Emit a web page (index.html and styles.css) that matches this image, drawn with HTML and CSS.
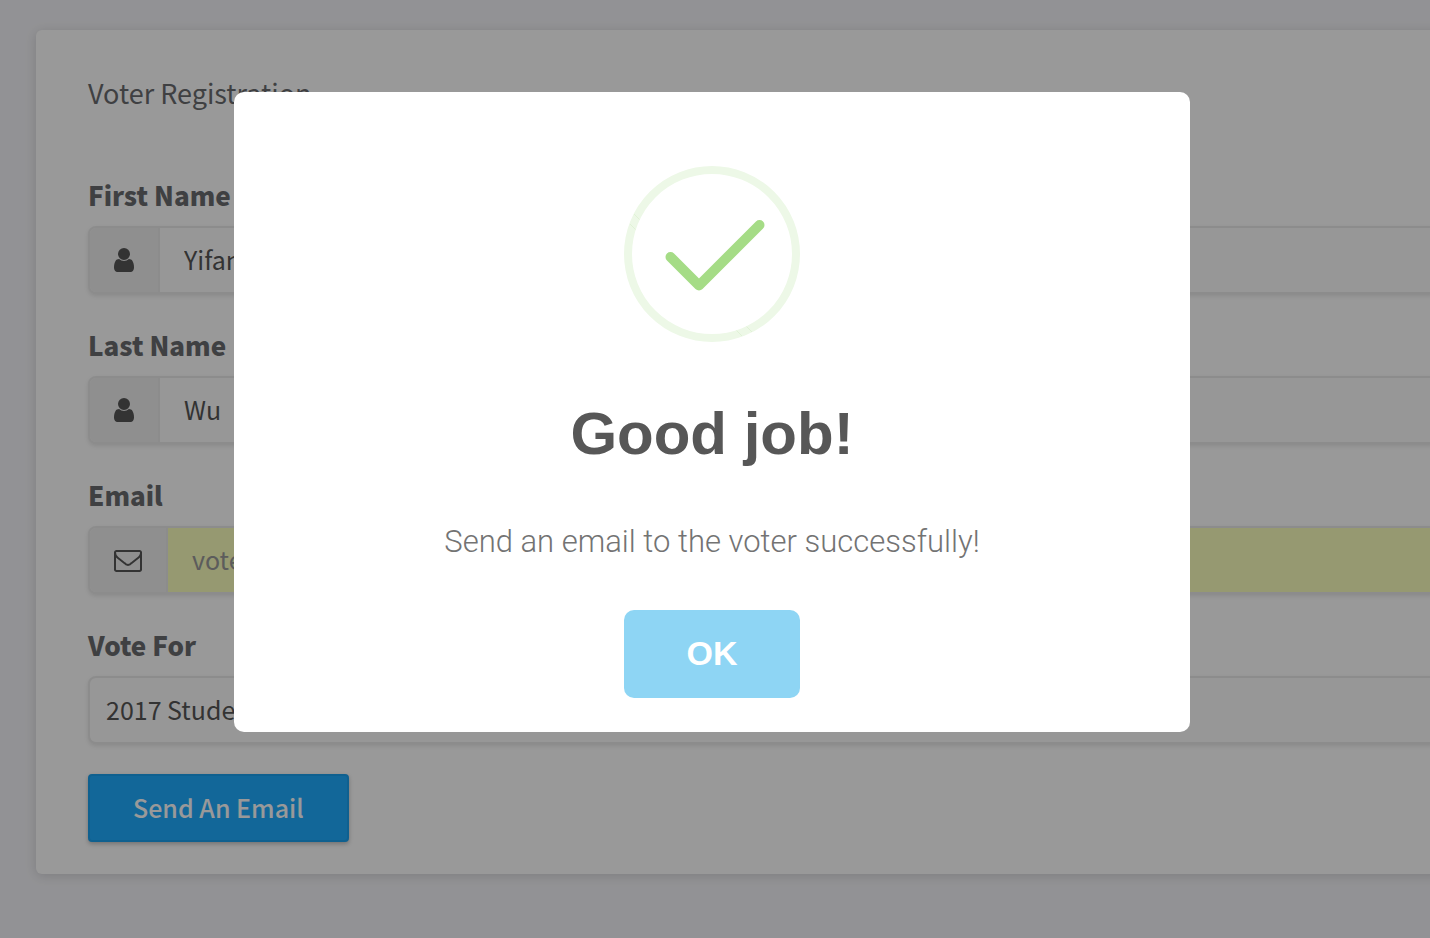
FILE: index.html
```html
<!DOCTYPE html>
<html lang="en">
<head>
<meta charset="utf-8">
<meta name="viewport" content="width=device-width, initial-scale=1">
<title>Voter Registration</title>
<link rel="stylesheet" href="styles.css">
</head>
<body>
<main class="page">
  <section class="card">
    <h1 class="card-title">Voter Registration</h1>
    <form class="form">
      <div class="field">
        <label class="label" for="first">First Name</label>
        <div class="group">
          <span class="addon"><svg class="icon-user" viewBox="256 128 1280 1536" aria-hidden="true"><path d="M1536 1399q0 109-62.5 187t-150.5 78h-854q-88 0-150.5-78t-62.5-187q0-85 8.5-160.5t31.5-152 58.5-131 94-89 134.500-34.500q131 128 313 128t313-128q76 0 134.500 34.500t94 89 58.500 131 31.500 152 8.500 160.500zm-256-887q0 159-112.500 271.500t-271.500 112.500-271.500-112.500-112.500-271.500 112.500-271.500 271.500-112.500 271.500 112.500 112.500 271.500z"/></svg></span>
          <input class="input" id="first" type="text" value="Yifan">
        </div>
      </div>
      <div class="field">
        <label class="label" for="last">Last Name</label>
        <div class="group">
          <span class="addon"><svg class="icon-user" viewBox="256 128 1280 1536" aria-hidden="true"><path d="M1536 1399q0 109-62.5 187t-150.5 78h-854q-88 0-150.5-78t-62.5-187q0-85 8.5-160.5t31.5-152 58.5-131 94-89 134.500-34.500q131 128 313 128t313-128q76 0 134.500 34.500t94 89 58.500 131 31.500 152 8.500 160.500zm-256-887q0 159-112.500 271.500t-271.500 112.500-271.500-112.500-112.500-271.500 112.500-271.500 271.500-112.500 271.500 112.500 112.500 271.500z"/></svg></span>
          <input class="input" id="last" type="text" value="Wu">
        </div>
      </div>
      <div class="field">
        <label class="label" for="email">Email</label>
        <div class="group">
          <span class="addon"><svg class="icon-mail" viewBox="0 128 1792 1536" aria-hidden="true"><path d="M1664 1504v-768q-32 36-69 66-268 206-426 338-51 43-83 67t-86.500 48.500-102.500 24.500h-2q-48 0-102.500-24.500t-86.500-48.500-83-67q-158-132-426-338-37-30-69-66v768q0 13 9.500 22.500t22.500 9.500h1472q13 0 22.500-9.500t9.500-22.500zm0-1051v-24.500l-.5-13-3-12.500-5.500-9-9-7.500-14-2.500h-1472q-13 0-22.500 9.500t-9.500 22.500q0 168 147 284 193 152 401 317 6 5 35 29.500t46 37.500 44.500 31.500 50.500 27.500 43 9h2q20 0 43-9t50.500-27.500 44.500-31.500 46-37.500 35-29.500q208-165 401-317 54-43 100.500-115.500t46.500-131.500zm128-37v1088q0 66-47 113t-113 47h-1472q-66 0-113-47t-47-113v-1088q0-66 47-113t113-47h1472q66 0 113 47t47 113z"/></svg></span>
          <input class="input input-autofill" id="email" type="email" placeholder="voter">
        </div>
      </div>
      <div class="field">
        <label class="label" for="vote">Vote For</label>
        <select class="select" id="vote"><option>2017 Student</option></select>
      </div>
      <button class="submit" type="button">Send An Email</button>
    </form>
  </section>
</main>
<div class="overlay">
  <div class="modal" role="dialog" aria-modal="true" aria-labelledby="modal-title">
    <svg class="success" viewBox="0 0 176 176" aria-hidden="true">
      <circle cx="88" cy="88" r="84" fill="none" stroke="#edf8e7" stroke-width="8"/>
      <path d="M10 48l5.500 5.500M6 58l5.500 5.500M112.500 164.500l5.500 5.500M122.500 160.500l5.500 5.500" stroke="#d3ecc5" stroke-width="0.5"/>
      <path d="M46.500 91L75 119.500L135.500 59" fill="none" stroke="#a5dc86" stroke-width="10" stroke-linecap="round" stroke-linejoin="round"/>
    </svg>
    <h2 class="modal-title" id="modal-title">Good job!</h2>
    <p class="modal-text">Send an email to the voter successfully!</p>
    <button class="ok" type="button">OK</button>
  </div>
</div>
</body>
</html>
```
FILE: styles.css
```css
* {
  box-sizing: border-box;
}

body {
  margin: 0;
  min-height: 100vh;
  overflow: hidden;
  background: #f4f4f8;
  color: #6a6c6f;
  font-family: "Noto Sans CJK SC", "Noto Sans", sans-serif;
  font-size: 27px;
}

.page {
  padding: 30px 0 64px 36px;
}

/* The card runs past the right edge of the window. */
.card {
  margin-right: -60px;
  padding: 43px 52px 32px;
  border-radius: 6px;
  background: #fff;
  box-shadow: 0 2px 12px rgba(0, 0, 0, 0.14);
}

.card-title {
  margin: 0 0 63px;
  font-size: 27px;
  font-weight: 400;
  line-height: 40px;
}

.field {
  margin-bottom: 32px;
}

.field:last-of-type {
  margin-bottom: 30px;
}

.label {
  display: block;
  margin-bottom: 12px;
  font-size: 26px;
  font-weight: 900;
  line-height: 38px;
}

.group,
.select {
  width: 100%;
  height: 68px;
  border: 2px solid #eaeaea;
  border-radius: 8px;
  background: #fcfcfc;
  box-shadow: 0 2px 4px rgba(0, 0, 0, 0.1);
}

.group {
  display: flex;
  overflow: hidden;
}

.addon {
  display: flex;
  align-items: center;
  padding: 0 24px;
  border-right: 2px solid #eaeaea;
  background: #eee;
}

.icon-user,
.icon-mail {
  display: block;
  height: 24px;
  fill: #555;
}

.icon-user {
  width: 20px;
}

.icon-mail {
  width: 28px;
}

.input {
  flex: 1;
  min-width: 0;
  padding: 0 24px 2px;
  border: 0;
  background: transparent;
  color: #555;
  font: inherit;
  font-size: 25px;
}

.input::placeholder {
  color: #999;
  opacity: 1;
}

.input-autofill {
  background: #faffbd;
}

.select {
  display: block;
  padding: 0 16px 2px;
  appearance: none;
  color: #555;
  font: inherit;
  font-size: 25px;
}

.submit {
  display: block;
  height: 68px;
  padding: 0 43px 2px;
  border: 2px solid #1aa0ef;
  border-radius: 4px;
  background: #1eacff;
  box-shadow: 0 2px 4px rgba(0, 0, 0, 0.25);
  color: #fff;
  font: inherit;
  font-size: 25px;
  font-weight: 500;
}

.overlay {
  position: fixed;
  inset: 0;
  display: flex;
  align-items: flex-start;
  justify-content: center;
  padding: 92px 6px 0 0;
  background: rgba(0, 0, 0, 0.4);
}

.modal {
  display: flex;
  flex-direction: column;
  align-items: center;
  width: 100%;
  max-width: 956px;
  padding: 74px 34px 34px;
  border-radius: 10px;
  background: #fff;
  text-align: center;
}

.success {
  display: block;
  width: 176px;
  height: 176px;
}

.modal-title {
  margin: 52px 0 48px;
  color: #575757;
  font-family: "Liberation Sans", Arial, sans-serif;
  font-size: 60px;
  font-weight: 700;
  line-height: 80px;
}

.modal-text {
  margin: 0 0 48px;
  color: #737373;
  font-family: Roboto, "Liberation Sans", sans-serif;
  font-size: 31px;
  font-weight: 300;
  line-height: 40px;
}

.ok {
  width: 176px;
  height: 88px;
  padding: 0 0 2px;
  border: 0;
  border-radius: 10px;
  background: #8ed5f4;
  color: #fff;
  font-family: "Liberation Sans", Arial, sans-serif;
  font-size: 34px;
  font-weight: 700;
}
```
